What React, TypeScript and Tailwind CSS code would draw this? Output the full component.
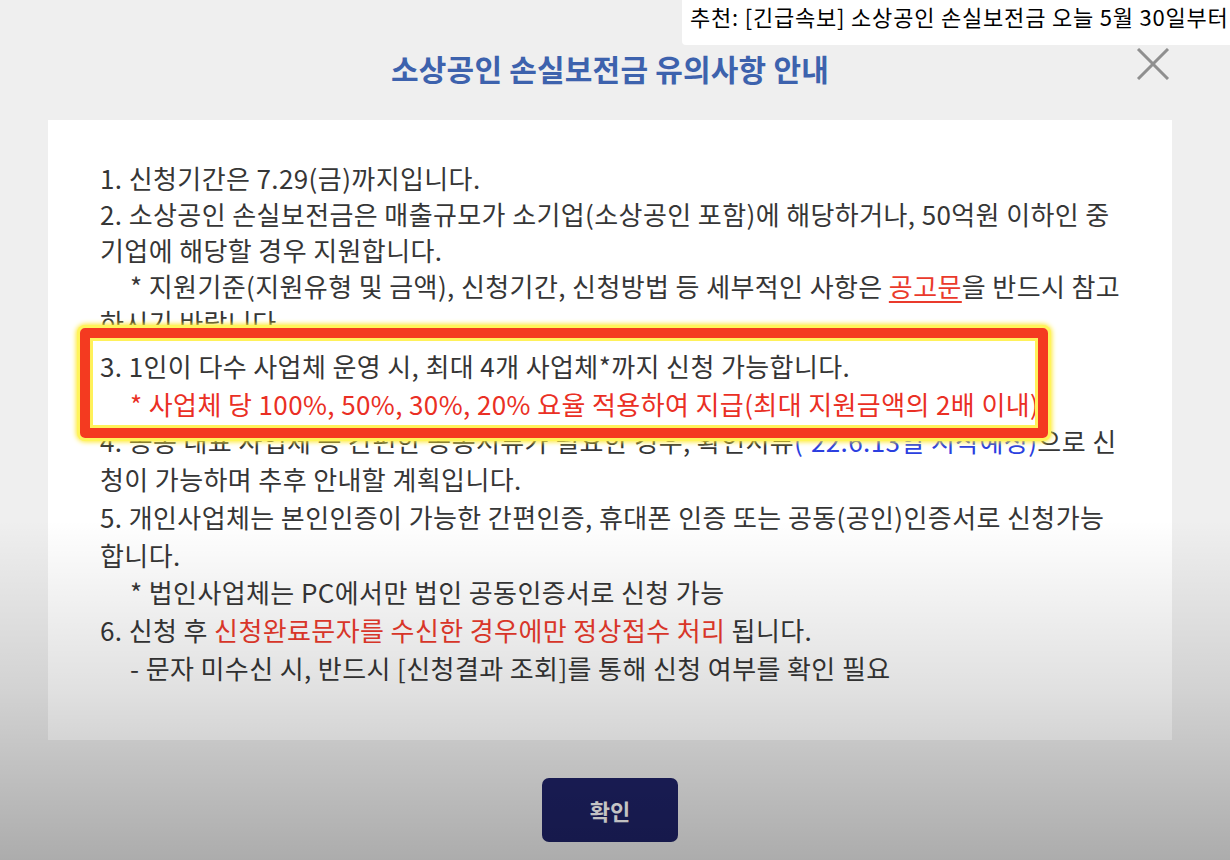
import React from "react";

const font = { fontFamily: '"Noto Sans CJK KR", "Noto Sans", sans-serif' };

function Line({ children, indent = false, className = "" }: { children: React.ReactNode; indent?: boolean; className?: string }) {
  return <div className={`whitespace-nowrap ${indent ? "pl-[30px]" : ""} ${className}`}>{children}</div>;
}

export default function App() {
  return (
    <div className="relative w-[1230px] h-[860px] overflow-hidden bg-[#efefef] flex flex-col" style={font}>
      {/* header */}
      <div className="mx-[48px] w-[1124px] flex items-start pt-[46px] h-[120px]">
        <div className="w-[50px]" />
        <h1 className="flex-1 text-center text-[30px] leading-[44px] font-bold text-[#3d62ad] tracking-[0.2px]">
          소상공인 손실보전금 유의사항 안내
        </h1>
        <div className="w-[50px] flex justify-end pr-[2px] pt-[2px]">
          <svg width="34" height="32" viewBox="0 0 34 32" className="shrink-0">
            <line x1="2" y1="1" x2="32" y2="31" stroke="#8f8f8f" strokeWidth="3" />
            <line x1="32" y1="1" x2="2" y2="31" stroke="#8f8f8f" strokeWidth="3" />
          </svg>
        </div>
      </div>

      {/* notice panel */}
      <div className="relative mx-[48px] w-[1124px] h-[620px] bg-white pt-[40px] pl-[52px] text-[26px] text-[#363636] tracking-[0.4px]">
        <div className="leading-[36px]">
          <Line>1. 신청기간은 7.29(금)까지입니다.</Line>
          <Line>2. 소상공인 손실보전금은 매출규모가 소기업(소상공인 포함)에 해당하거나, 50억원 이하인 중</Line>
          <Line>기업에 해당할 경우 지원합니다.</Line>
          <Line indent>
            * 지원기준(지원유형 및 금액), 신청기간, 신청방법 등 세부적인 사항은{" "}
            <span className="text-[#ea3a2c] underline underline-offset-4">공고문</span>을 반드시 참고
          </Line>
          <Line>하시기 바랍니다.</Line>
        </div>
        <div className="leading-[37.7px] mt-[7px]">
          <Line>3. 1인이 다수 사업체 운영 시, 최대 4개 사업체*까지 신청 가능합니다.</Line>
          <Line indent className="text-[#ea2f24]">
            * 사업체 당 100%, 50%, 30%, 20% 요율 적용하여 지급(최대 지원금액의 2배 이내)
          </Line>
          <Line>
            4. 공동 대표 사업체 등 간편한 공동서류가 필요한 경우, 확인서류
            <span className="text-[#2b3fe0]">('22.6.13일 시작예정)</span>으로 신
          </Line>
          <Line>청이 가능하며 추후 안내할 계획입니다.</Line>
          <Line>5. 개인사업체는 본인인증이 가능한 간편인증, 휴대폰 인증 또는 공동(공인)인증서로 신청가능</Line>
          <Line>합니다.</Line>
          <Line indent>* 법인사업체는 PC에서만 법인 공동인증서로 신청 가능</Line>
          <Line>
            6. 신청 후 <span className="text-[#ea3a2c]">신청완료문자를 수신한 경우에만 정상접수 처리</span> 됩니다.
          </Line>
          <Line indent className="pl-[28px]">- 문자 미수신 시, 반드시 [신청결과 조회]를 통해 신청 여부를 확인 필요</Line>
        </div>

        {/* highlight box drawn over the text */}
        <div className="absolute left-[32px] top-[208px] w-[968px] h-[110px] rounded-[5px] border-[10px] border-[#f43a20] shadow-[0_0_0_3px_#fff45a,0_0_5px_4px_#ffe82e,inset_0_0_0_3px_#fff15a]" />
      </div>

      {/* confirm */}
      <div className="mx-[48px] w-[1124px] flex justify-center pt-[38px]">
        <button className="w-[136px] h-[64px] rounded-[7px] bg-[#1e2266] text-white text-[22px] font-bold">확인</button>
      </div>

      {/* video shade */}
      <div className="pointer-events-none absolute left-0 right-0 bottom-0 h-[340px] bg-linear-to-b from-black/0 via-black/12 to-black/28" />

      {/* recommendation card */}
      <div className="absolute left-[682px] right-0 top-0 h-[45px] bg-white rounded-bl-[4px] overflow-hidden pl-[8px] pt-[1px]">
        <div className="whitespace-nowrap text-[22px] leading-[30px] text-black tracking-[0.8px]">
          추천: [긴급속보] 소상공인 손실보전금 오늘 5월 30일부터
        </div>
      </div>
    </div>
  );
}
